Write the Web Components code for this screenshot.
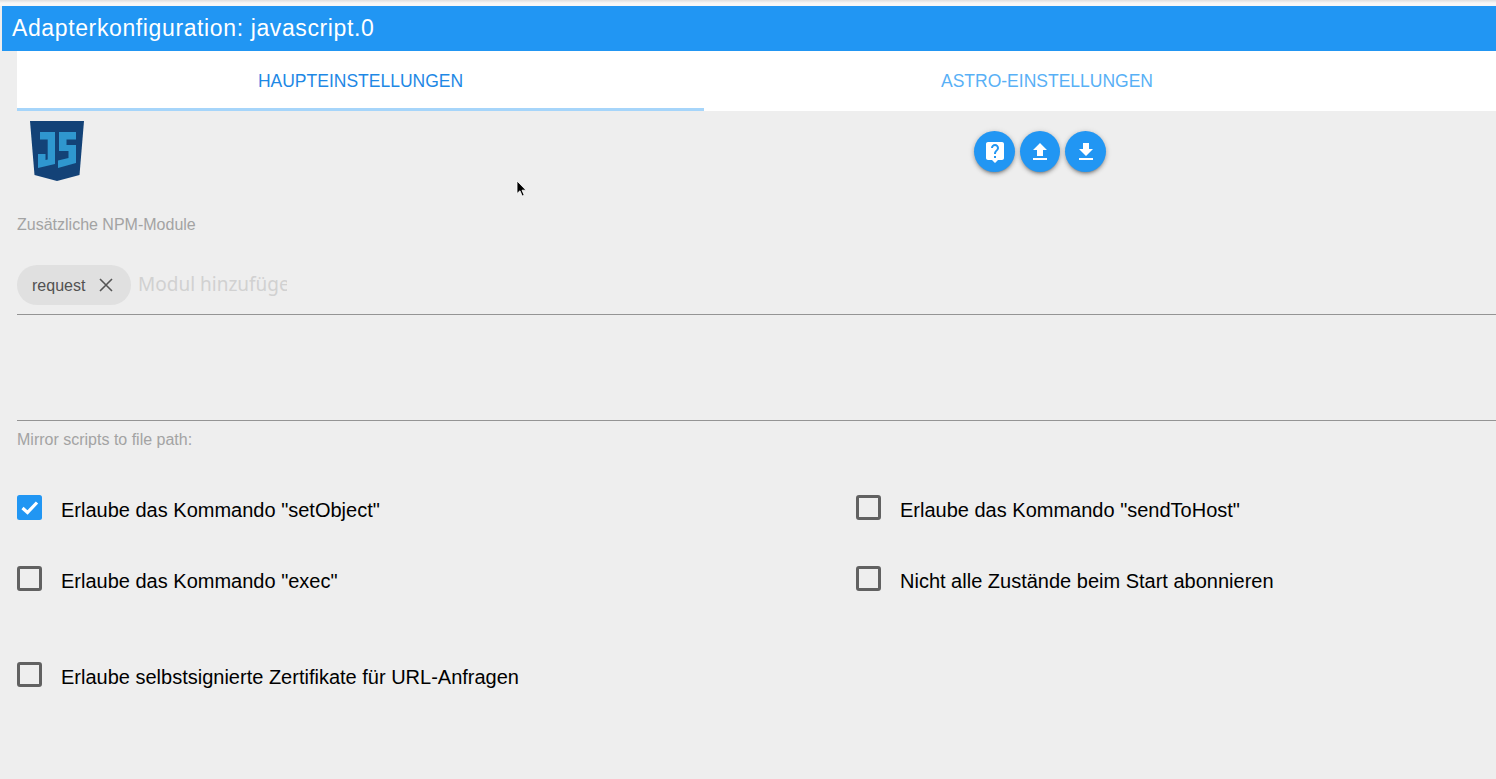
<!DOCTYPE html>
<html lang="de">
<head>
<meta charset="utf-8">
<title>Adapterkonfiguration</title>
<style>
  html, body { margin: 0; height: 100%; background: #eeeeee; overflow: hidden; }
  body { font-family: "Liberation Sans", Arial, sans-serif; }
</style>
</head>
<body>
<config-app></config-app>

<script>
const ICONS = {
  help: '<path d="M19 2H5c-1.1 0-2 .9-2 2v14c0 1.1.9 2 2 2h4l3 3 3-3h4c1.1 0 2-.9 2-2V4c0-1.1-.9-2-2-2zm-6 16h-2v-2h2v2zm2.07-7.75l-.9.92C13.45 11.9 13 12.5 13 14h-2v-.5c0-1.1.45-2.1 1.17-2.83l1.24-1.26c.37-.36.59-.86.59-1.41 0-1.1-.9-2-2-2s-2 .9-2 2H8c0-2.21 1.79-4 4-4s4 1.79 4 4c0 .88-.36 1.68-.93 2.25z"/>',
  upload: '<path d="M9 16h6v-6h4l-7-7-7 7h4zm-4 2h14v2H5z"/>',
  download: '<path d="M19 9h-4V3H9v6H5l7 7 7-7zM5 18v2h14v-2H5z"/>'
};

class AppBar extends HTMLElement {
  constructor() {
    super();
    this.attachShadow({ mode: 'open' });
    this.shadowRoot.innerHTML = `
      <style>
        :host {
          display: block;
          margin-left: 2px;
          height: 45px;
          line-height: 44px;
          padding-left: 10px;
          background: #2196f3;
          color: #fff;
          font-size: 23px;
          letter-spacing: .62px;
        }
      </style>
      <slot></slot>`;
  }
}

class TabBar extends HTMLElement {
  constructor() {
    super();
    this.attachShadow({ mode: 'open' });
    this.shadowRoot.innerHTML = `
      <style>
        :host {
          display: grid;
          grid-template-columns: 687px 686px 1fr;
          margin-left: 17px;
          height: 60px;
          background: #fff;
        }
      </style>
      <slot></slot>`;
  }
}

class TabItem extends HTMLElement {
  constructor() {
    super();
    this.attachShadow({ mode: 'open' });
    this.shadowRoot.innerHTML = `
      <style>
        :host {
          display: flex;
          align-items: center;
          justify-content: center;
          box-sizing: border-box;
          height: 60px;
          font-size: 17.5px;
          color: #2196f3;
          opacity: .75;
        }
        :host([active]) {
          border-bottom: 3px solid #a6d5fa;
          padding-top: 3px;
          color: #1e88e5;
          opacity: 1;
        }
      </style>
      <slot></slot>`;
  }
}

class RoundButton extends HTMLElement {
  constructor() {
    super();
    this.attachShadow({ mode: 'open' });
    const icon = ICONS[this.getAttribute('icon')] || '';
    this.shadowRoot.innerHTML = `
      <style>
        :host {
          display: flex;
          align-items: center;
          justify-content: center;
          width: 41px;
          height: 41px;
          border-radius: 50%;
          background: #2196f3;
          box-shadow: 0 3px 3px -2px rgba(0,0,0,.3), 0 2px 4px 0 rgba(0,0,0,.2), 0 1px 6px 0 rgba(0,0,0,.14);
        }
        svg { width: 24px; height: 24px; fill: #fff; display: block; }
      </style>
      <svg viewBox="0 0 24 24">${icon}</svg>`;
  }
}

class JsLogo extends HTMLElement {
  constructor() {
    super();
    this.attachShadow({ mode: 'open' });
    this.shadowRoot.innerHTML = `
      <style>
        :host { display: block; width: 54px; height: 60px; }
        svg { display: block; }
      </style>
      <svg width="54" height="60" viewBox="0 0 54 60">
        <path fill="#134277" d="M0 0H54L49.5 54 27 60 4.5 54Z"/>
        <path fill="#2f97cf" d="M10 11H25V43L8 47V33H15.5V39L17.7 38.5V18.5H10Z"/>
        <path fill="#2f97cf" d="M29 11H46V18.5H36.5V24H46V42L28 47V39.5L38.5 37V30H29Z"/>
      </svg>`;
  }
}

class ChipInput extends HTMLElement {
  constructor() {
    super();
    this.attachShadow({ mode: 'open' });
    this.shadowRoot.innerHTML = `
      <style>
        :host {
          display: flex;
          align-items: flex-start;
          box-sizing: border-box;
          height: 50px;
          border-bottom: 1px solid #949494;
        }
        .chip {
          display: flex;
          align-items: center;
          flex: none;
          box-sizing: border-box;
          width: 114px;
          height: 40px;
          padding: 1px 0 0 15px;
          border-radius: 20px;
          background: #e0e0e0;
          color: #525252;
          font-size: 16px;
        }
        .chip svg { margin: -1px 0 0 14px; width: 14px; height: 14px; }
        .placeholder {
          width: 149px;
          margin-left: 7px;
          overflow: hidden;
          white-space: nowrap;
          font-family: "Noto Sans", sans-serif;
          font-size: 19px;
          line-height: 38px;
          color: #d1d1d1;
        }
      </style>
      <div class="chip"><slot></slot>
        <svg viewBox="0 0 14 14"><path d="M1 1L13 13M13 1L1 13" stroke="#555" stroke-width="1.6" fill="none"/></svg>
      </div>
      <div class="placeholder">${this.getAttribute('placeholder') || ''}</div>`;
  }
}

class CheckItem extends HTMLElement {
  constructor() {
    super();
    this.attachShadow({ mode: 'open' });
    const box = this.hasAttribute('checked')
      ? `<svg width="25" height="25" viewBox="0 0 25 25"><rect width="25" height="25" rx="2.5" fill="#2196f3"/><path d="M5.5 13L10.5 17.5 20 7.5" fill="none" stroke="#fff" stroke-width="3.2"/></svg>`
      : `<svg width="25" height="25" viewBox="0 0 25 25"><rect x="1.5" y="1.5" width="22" height="22" rx="1.5" fill="none" stroke="#616161" stroke-width="3"/></svg>`;
    this.shadowRoot.innerHTML = `
      <style>
        :host {
          display: flex;
          align-items: flex-start;
          gap: 19px;
          font-size: 20px;
          color: #000;
          line-height: 28px;
        }
        svg { display: block; flex: none; }
        .label { margin-top: 1px; }
      </style>
      ${box}<div class="label"><slot></slot></div>`;
  }
}

class ConfigApp extends HTMLElement {
  constructor() {
    super();
    this.attachShadow({ mode: 'open' });
    this.shadowRoot.innerHTML = `
      <style>
        :host {
          display: block;
          padding-top: 6px;
          background: linear-gradient(#dedede, #f7f7f7 3px, #f7f7f7) top / 100% 6px no-repeat #eeeeee;
        }
        .content { padding-left: 17px; height: 668px; }
        .head {
          display: grid;
          grid-template-columns: 957px auto;
          padding-top: 10px;
          height: 73px;
        }
        .logo { padding-left: 13px; }
        .buttons { display: flex; gap: 5px; margin-top: 10px; align-self: start; }
        .buttons .narrow { width: 40px; }
        .caption { font-size: 16px; color: #a3a3a3; line-height: 20px; }
        .npm { margin-top: 21px; }
        .npm-input { margin-top: 30px; }
        .mirror { box-sizing: border-box; height: 106px; border-bottom: 1px solid #949494; }
        .mirror-label { margin-top: 9px; }
        .checks {
          display: grid;
          grid-template-columns: 839px 1fr;
          grid-auto-rows: 71px;
          margin-top: 45px;
        }
        .checks .wide { grid-column: 1 / -1; margin-top: 25px; }
        /* mouse pointer caught in the shot */
        .cursor { position: absolute; left: 516px; top: 180px; }
      </style>
      <app-bar>Adapterkonfiguration: javascript.0</app-bar>
      <tab-bar>
        <tab-item active>HAUPTEINSTELLUNGEN</tab-item>
        <tab-item>ASTRO-EINSTELLUNGEN</tab-item>
      </tab-bar>
      <div class="content">
        <div class="head">
          <div class="logo"><js-logo></js-logo></div>
          <div class="buttons">
            <round-button icon="help"></round-button>
            <round-button icon="upload" class="narrow"></round-button>
            <round-button icon="download"></round-button>
          </div>
        </div>
        <div class="caption npm">Zusätzliche NPM-Module</div>
        <chip-input class="npm-input" placeholder="Modul hinzufügen">request</chip-input>
        <div class="mirror"></div>
        <div class="caption mirror-label">Mirror scripts to file path:</div>
        <div class="checks">
          <check-item checked>Erlaube das Kommando "setObject"</check-item>
          <check-item>Erlaube das Kommando "sendToHost"</check-item>
          <check-item>Erlaube das Kommando "exec"</check-item>
          <check-item>Nicht alle Zustände beim Start abonnieren</check-item>
          <check-item class="wide">Erlaube selbstsignierte Zertifikate für URL-Anfragen</check-item>
        </div>
      </div>
      <svg class="cursor" width="12" height="18" viewBox="0 0 12 18">
        <path d="M1 1V13.5L4 10.8 6.2 16 8.2 15.2 6 10.2H10Z" fill="#000" stroke="#fff" stroke-width=".8"/>
      </svg>`;
  }
}

customElements.define('app-bar', AppBar);
customElements.define('tab-bar', TabBar);
customElements.define('tab-item', TabItem);
customElements.define('round-button', RoundButton);
customElements.define('js-logo', JsLogo);
customElements.define('chip-input', ChipInput);
customElements.define('check-item', CheckItem);
customElements.define('config-app', ConfigApp);
</script>
</body>
</html>
